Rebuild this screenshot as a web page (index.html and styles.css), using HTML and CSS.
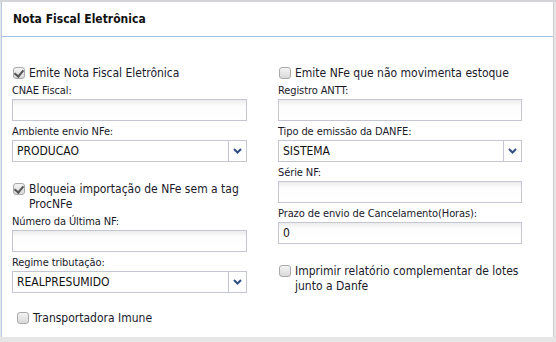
FILE: index.html
```html
<!DOCTYPE html>
<html lang="pt">
<head>
<meta charset="utf-8">
<title>Nota Fiscal Eletrônica</title>
<link rel="stylesheet" href="styles.css">
</head>
<body>
<div class="panel">
  <div class="panel-head">Nota Fiscal Eletrônica</div>
  <div class="panel-body">
    <div class="col col-left">
      <label class="check"><span class="box checked"></span><span class="check-text">Emite Nota Fiscal Eletrônica</span></label>
      <div class="label">CNAE Fiscal:</div>
      <div class="input"></div>
      <div class="label">Ambiente envio NFe:</div>
      <div class="select"><span class="value">PRODUCAO</span><span class="arrow"><svg width="9" height="6" viewBox="0 0 9 6"><path d="M1 1 L4.5 4.5 L8 1" fill="none" stroke="#2f4f80" stroke-width="2"/></svg></span></div>
      <label class="check check-gap"><span class="box checked"></span><span class="check-text">Bloqueia importação de NFe sem a tag ProcNFe</span></label>
      <div class="label">Número da Última NF:</div>
      <div class="input"></div>
      <div class="label">Regime tributação:</div>
      <div class="select"><span class="value">REALPRESUMIDO</span><span class="arrow"><svg width="9" height="6" viewBox="0 0 9 6"><path d="M1 1 L4.5 4.5 L8 1" fill="none" stroke="#2f4f80" stroke-width="2"/></svg></span></div>
      <label class="check check-last"><span class="box"></span><span class="check-text">Transportadora Imune</span></label>
    </div>
    <div class="col col-right">
      <label class="check"><span class="box"></span><span class="check-text">Emite NFe que não movimenta estoque</span></label>
      <div class="label">Registro ANTT:</div>
      <div class="input"></div>
      <div class="label">Tipo de emissão da DANFE:</div>
      <div class="select"><span class="value">SISTEMA</span><span class="arrow"><svg width="9" height="6" viewBox="0 0 9 6"><path d="M1 1 L4.5 4.5 L8 1" fill="none" stroke="#2f4f80" stroke-width="2"/></svg></span></div>
      <div class="label">Série NF:</div>
      <div class="input"></div>
      <div class="label">Prazo de envio de Cancelamento(Horas):</div>
      <div class="input"><span class="value">0</span></div>
      <label class="check check-gap2"><span class="box"></span><span class="check-text">Imprimir relatório complementar de lotes junto a Danfe</span></label>
    </div>
  </div>
</div>
</body>
</html>
```
FILE: styles.css
```css
* { box-sizing: border-box; }
html, body { margin: 0; padding: 0; }
body {
  background: #e6e6e6;
  width: 556px;
  height: 342px;
  overflow: hidden;
  font-family: "DejaVu Sans Condensed", "DejaVu Sans", sans-serif;
  font-stretch: condensed;
  color: #1a1a2a;
  border-top: 2px solid #d3d5d9;
}
.panel {
  margin-left: 1px;
  width: 553px;
  height: 335px;
  background: #fff;
  border-left: 1px solid #b9cbe3;
  border-right: 1px solid #cdcdcd;
}
.panel-head {
  height: 35px;
  border-bottom: 1px solid #a3c3e8;
  padding: 10px 0 0 11px;
  font-size: 12px;
  font-weight: bold;
  line-height: 15px;
  color: #111;
}
.panel-body {
  display: grid;
  grid-template-columns: 235px 244px;
  column-gap: 31px;
  padding: 29px 0 0 10px;
}
.col { display: flex; flex-direction: column; }
.check {
  display: flex;
  align-items: flex-start;
  font-size: 12px;
  line-height: 15px;
}
.check-text { flex: 1; }
.box {
  flex: none;
  width: 12px;
  height: 12px;
  margin: 1px 4px 0 1px;
  border: 1px solid #a9a9a9;
  border-radius: 3px;
  background: linear-gradient(#f4f4f4, #d9d9d9);
  position: relative;
}
.box.checked::after {
  content: "";
  position: absolute;
  left: 2px;
  top: 0px;
  width: 4px;
  height: 7px;
  border: solid #555;
  border-width: 0 2px 2px 0;
  transform: rotate(40deg);
}
.check-gap { margin-top: 19px; }
.check-last { margin-top: 17px; padding-left: 4px; }
.check-gap2 { margin-top: 19px; }
.label {
  font-size: 11px;
  line-height: 18px;
  height: 18px;
  padding-top: 1px;
  letter-spacing: -0.1px;
}
.input, .select {
  height: 22px;
  margin-bottom: 1px;
  border: 1px solid #c4c7d3;
  background: linear-gradient(#ececec, #fdfdfd 6px, #fff);
  display: flex;
  align-items: center;
  font-size: 12px;
  color: #111;
}
.value { padding-left: 4px; flex: 1; }
.select { background: #fff; }
.arrow {
  width: 18px;
  height: 100%;
  border-left: 1px solid #c4c7d3;
  display: flex;
  align-items: center;
  justify-content: center;
}
```
